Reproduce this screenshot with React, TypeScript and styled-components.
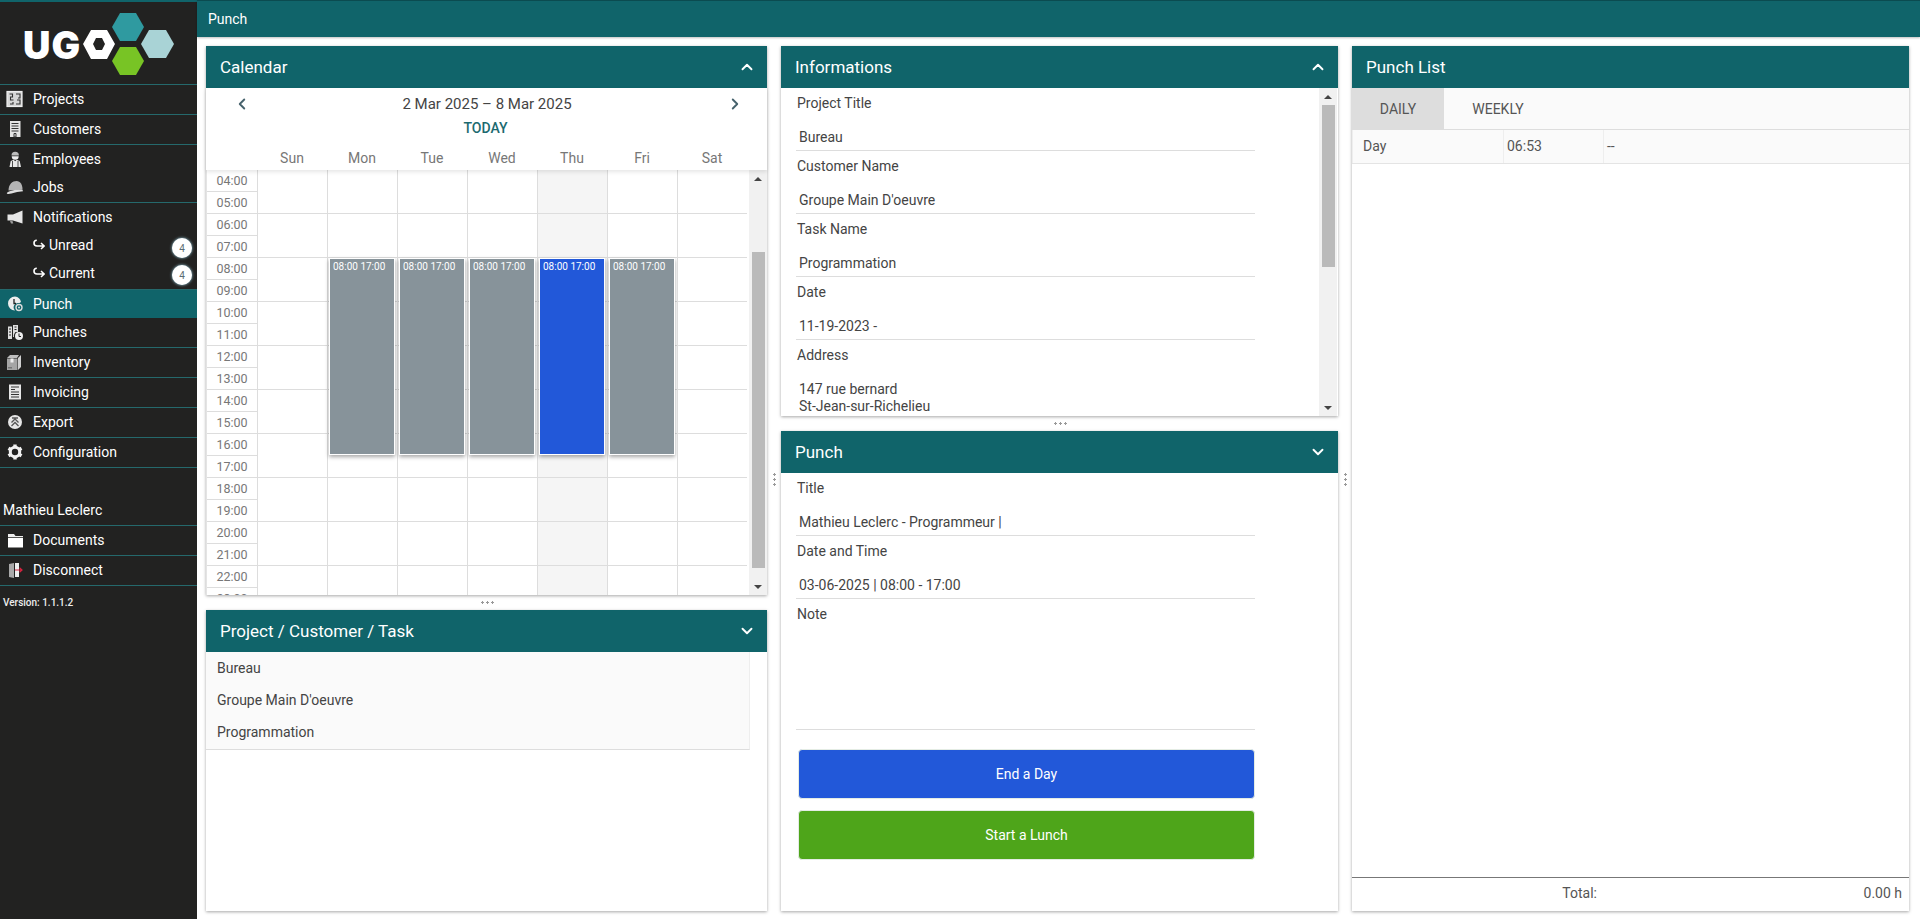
import React from "react";
import styled, { createGlobalStyle } from "styled-components";
import { ChevronDown, ChevronLeft, ChevronRight, ChevronUp } from "lucide-react";

const TEAL = "#10646a";

const GlobalStyle = createGlobalStyle`
  html, body {
    margin: 0;
    padding: 0;
    background: #fff;
    font-family: Roboto, "Liberation Sans", sans-serif;
    font-size: 14px;
    color: #444;
  }
  * { box-sizing: border-box; }
`;

const Shell = styled.div`
  display: flex;
  width: 1920px;
  height: 919px;
  overflow: hidden;
`;

/* ---------- sidebar ---------- */

const Sidebar = styled.nav`
  width: 197px;
  flex: none;
  background: #222221;
  border-top: 2px solid ${TEAL};
  color: #fff;
`;

const LogoBox = styled.div`
  height: 83px;
  border-bottom: 1px solid #25696c;
`;

const NavItem = styled.div<{ $h?: number; $line?: boolean; $active?: boolean; $sub?: boolean }>`
  position: relative;
  display: flex;
  align-items: center;
  height: ${(p) => p.$h ?? 30}px;
  padding-left: ${(p) => (p.$sub ? 33 : 6)}px;
  padding-bottom: ${(p) => (p.$active ? 0 : 2)}px;
  gap: ${(p) => (p.$sub ? 4 : 0)}px;
  background: ${(p) => (p.$active ? TEAL : "transparent")};
  border-bottom: ${(p) => (p.$line === false ? "none" : "1px solid #25696c")};
  font-size: 14px;
`;

const NavIconBox = styled.span`
  width: 27px;
  display: flex;
  align-items: center;
  flex: none;
`;

const Badge = styled.span`
  position: absolute;
  right: 5px;
  top: 6px;
  width: 20px;
  height: 20px;
  border-radius: 50%;
  background: #fff;
  box-shadow: 0 0 3px #9fd4e6;
  color: #5b6b74;
  font-size: 10px;
  display: flex;
  align-items: center;
  justify-content: center;
`;

const UserName = styled.div`
  height: 58px;
  display: flex;
  align-items: flex-end;
  padding: 0 0 7px 3px;
  border-bottom: 1px solid #25696c;
`;

const Version = styled.div`
  padding: 11px 0 0 3px;
  font-size: 10px;
  font-weight: 500;
  color: #eee;
`;

/* ---------- main ---------- */

const Main = styled.main`
  flex: 1;
  display: flex;
  flex-direction: column;
  min-width: 0;
`;

const TopBar = styled.header`
  height: 37px;
  flex: none;
  background: ${TEAL};
  border-top: 1px solid #0b4b50;
  box-shadow: 0 1px 2px rgba(0, 0, 0, 0.25);
  color: #fff;
  font-size: 14px;
  display: flex;
  align-items: center;
  padding-left: 11px;
`;

const Columns = styled.div`
  flex: 1;
  display: flex;
  padding: 9px 11px 8px 9px;
  min-height: 0;
`;

const Column = styled.div<{ $w: number }>`
  width: ${(p) => p.$w}px;
  flex: none;
  display: flex;
  flex-direction: column;
`;

const ColumnGutter = styled.div`
  width: 14px;
  flex: none;
  display: flex;
  justify-content: center;
  padding-top: 426px;
`;

const DotsV = styled.span`
  width: 3px;
  height: 14px;
  background-image: radial-gradient(circle, #999 1px, transparent 1.2px);
  background-size: 3px 5px;
`;

const RowGutter = styled.div`
  height: 15px;
  flex: none;
  display: flex;
  justify-content: center;
  align-items: center;
`;

const DotsH = styled.span`
  width: 14px;
  height: 3px;
  background-image: radial-gradient(circle, #999 1px, transparent 1.2px);
  background-size: 5px 3px;
`;

const Panel = styled.section<{ $h?: number }>`
  display: flex;
  flex-direction: column;
  height: ${(p) => (p.$h ? `${p.$h}px` : "auto")};
  flex: ${(p) => (p.$h ? "none" : "1")};
  background: #fff;
  box-shadow: 0 1px 3px rgba(0, 0, 0, 0.35);
  min-height: 0;
`;

const PanelHeader = styled.div`
  height: 42px;
  flex: none;
  background: ${TEAL};
  color: #fff;
  font-size: 17px;
  display: flex;
  align-items: center;
  justify-content: space-between;
  padding: 0 11px 0 14px;
`;

/* ---------- scrollbars ---------- */

const Track = styled.div`
  position: relative;
  width: 18px;
  flex: none;
  background: #f1f1f1;
`;

const Thumb = styled.div<{ $top: number; $height: number }>`
  position: absolute;
  left: 3px;
  right: 2px;
  top: ${(p) => p.$top}px;
  height: ${(p) => p.$height}px;
  background: #bababa;
`;

const Arrow = styled.span<{ $down?: boolean }>`
  position: absolute;
  left: 5px;
  ${(p) => (p.$down ? "bottom: 6px;" : "top: 7px;")}
  border-left: 4px solid transparent;
  border-right: 4px solid transparent;
  ${(p) => (p.$down ? "border-top: 4px solid #444;" : "border-bottom: 4px solid #444;")}
`;

/* ---------- calendar ---------- */

const CalToolbar = styled.div`
  height: 82px;
  flex: none;
  position: relative;
  z-index: 1;
  background: #fff;
  box-shadow: 0 2px 4px rgba(0, 0, 0, 0.1);
  color: #4a4a4a;
`;

const DateRow = styled.div`
  height: 32px;
  display: flex;
  align-items: center;
  justify-content: space-between;
  padding: 0 23px 0 27px;
  font-size: 15px;
  color: #444;
  svg { color: #46626c; }
`;

const DateLabel = styled.span`
  margin-right: 3px;
`;

const TodayRow = styled.div`
  height: 16px;
  text-align: center;
  line-height: 16px;
  font-size: 14px;
  font-weight: 500;
  color: #1c6a70;
  padding-right: 2px;
`;

const DayHeads = styled.div`
  display: grid;
  grid-template-columns: 51px repeat(7, 70px);
  margin-top: 11px;
  height: 22px;
  line-height: 22px;
  text-align: center;
  color: #777;
`;

const CalBody = styled.div`
  flex: 1;
  display: flex;
  min-height: 0;
`;

const TimeGrid = styled.div`
  flex: 1;
  display: grid;
  grid-template-columns: 51px repeat(7, 70px);
  overflow: hidden;
`;

const TimeCol = styled.div`
  border-left: 1px solid #e4e4e4;
`;

const TimeLabel = styled.div`
  height: 22px;
  line-height: 21px;
  border-bottom: 1px solid #ddd;
  text-align: center;
  font-size: 12.5px;
  color: #777;
`;

const DayCol = styled.div<{ $today?: boolean }>`
  position: relative;
  border-left: 1px solid #ddd;
  background: ${(p) => (p.$today ? "#f5f5f5" : "#fff")};
`;

const HourSlot = styled.div`
  height: 44px;
  border-bottom: 1px solid #ddd;
`;

const CalEvent = styled.div<{ $current?: boolean }>`
  position: absolute;
  top: 88px;
  left: 1px;
  right: 2px;
  height: 197px;
  padding: 2px 3px;
  background: ${(p) => (p.$current ? "#2258d9" : "#87939a")};
  border: 1px solid #fff;
  box-shadow: 0 2px 4px rgba(0, 0, 0, 0.35);
  color: #fff;
  font-size: 10px;
  line-height: 12px;
  white-space: nowrap;
`;

const ProjectTable = styled.div`
  width: 544px;
  padding-bottom: 1px;
  background: #fafafa;
  border-right: 1px solid #eee;
  border-bottom: 1px solid #ddd;
`;

const ProjectRow = styled.div`
  height: 32px;
  line-height: 32px;
  padding-left: 11px;
  color: #444;
`;

/* ---------- info / punch forms ---------- */

const ScrollArea = styled.div`
  flex: 1;
  display: flex;
  min-height: 0;
  padding-right: 1px;
`;

const FieldList = styled.div`
  flex: 1;
  overflow: hidden;
  padding-left: 15px;
`;

const Form = styled.div`
  flex: 1;
  padding-left: 15px;
`;

const Field = styled.div`
  width: 459px;
`;

const FieldLabel = styled.div`
  height: 30px;
  line-height: 30px;
  padding-left: 1px;
  color: #444;
`;

const FieldValue = styled.div`
  min-height: 33px;
  padding: 7px 0 0 3px;
  line-height: 24px;
  border-bottom: 1px solid #ddd;
  color: #444;
`;

const AddressValue = styled.div`
  padding: 11px 0 0 3px;
  line-height: 17px;
  color: #444;
`;

const NoteArea = styled.div`
  height: 102px;
  margin-top: -1px;
  border-bottom: 1px solid #ddd;
`;

const ActionButton = styled.button<{ $color: string }>`
  display: block;
  width: 457px;
  height: 50px;
  margin: 0 0 11px 2px;
  border: 1px solid #e4ece4;
  border-radius: 4px;
  background: ${(p) => p.$color};
  color: #fff;
  font: 14px Roboto, "Liberation Sans", sans-serif;
`;

const Actions = styled.div`
  padding-top: 19px;
`;

/* ---------- punch list ---------- */

const Tabs = styled.div`
  display: flex;
  height: 42px;
  flex: none;
  background: #fafafa;
  border-bottom: 1px solid #ddd;
`;

const Tab = styled.div<{ $active?: boolean; $w: number }>`
  width: ${(p) => p.$w}px;
  background: ${(p) => (p.$active ? "#dddddd" : "transparent")};
  text-align: center;
  line-height: 42px;
  color: #555;
`;

const ListRow = styled.div`
  display: grid;
  grid-template-columns: 151px 100px 1fr;
  height: 34px;
  flex: none;
  background: #fafafa;
  border-bottom: 1px solid #e4e4e4;
  line-height: 32px;
`;

const ListCell = styled.div<{ $pl?: number }>`
  padding-left: ${(p) => p.$pl ?? 3}px;
  border-left: 1px solid #eee;
  color: #555;
`;

const ListSpacer = styled.div`
  flex: 1;
`;

const ListFooter = styled.div`
  display: grid;
  grid-template-columns: 245px 1fr;
  height: 34px;
  flex: none;
  border-top: 1px solid #777;
  line-height: 31px;
  color: #555;
  text-align: right;
  padding-right: 7px;
`;

/* ---------- drawings ---------- */

const Svg: React.FC<{ children: React.ReactNode }> = ({ children }) => (
  <svg width={18} height={18} viewBox="0 0 18 18">
    {children}
  </svg>
);

const Logo = () => (
  <svg width="197" height="83" viewBox="0 0 197 83">
    <text x="23" y="57" fill="#fff" fontFamily="Inter, Roboto, sans-serif" fontWeight="900" fontSize="38" letterSpacing="1">
      UG
    </text>
    <path
      fillRule="evenodd"
      fill="#fff"
      d="M83 42 L91 28 L107 28 L115 42 L107 57 L91 57 Z M93 42 L96 36 L102 36 L105 42 L102 48 L96 48 Z"
    />
    <polygon points="112,25 120,11 136,11 144,25 136,39 120,39" fill="#2f9aa0" />
    <polygon points="141,42 149,28 166,28 174,42 166,56 149,56" fill="#a9d3d6" />
    <polygon points="112,59 120,45 136,45 144,59 136,73 120,73" fill="#78c425" />
  </svg>
);

const IconProjects = () => (
  <Svg>
    <rect x="1" y="1.500" width="15" height="15" fill="#d6d6d6" stroke="#eee" strokeWidth="1.200" />
    <path d="M3.500 4h3v3h-2v3h3M10 4h4v4h-2M4 14h3v-2M10 14h4v-4h-3" fill="none" stroke="#333" strokeWidth="1.100" />
  </Svg>
);
const IconCustomers = () => (
  <Svg>
    <rect x="4" y="1" width="10.500" height="16" fill="#e4e4e4" />
    <path d="M5.500 3.500h7M5.500 6h7M5.500 8.500h7M5.500 11h7M8 13.500h2V17H8z" stroke="#333" strokeWidth="1" fill="none" />
  </Svg>
);
const IconEmployee = () => (
  <Svg>
    <path d="M5.500 5.500a3.700 3.700 0 0 1 7.400 0z" fill="#bbb" />
    <path d="M5.700 6.300h7a3.500 3.500 0 0 1-7 0z" fill="#eee" />
    <path d="M3.500 17l1.200-6 3-1.200 1.500 1.500 1.500-1.500 3 1.200 1.300 6z" fill="#e8e8e8" />
    <path d="M6.500 11v6M12 11v6" stroke="#222" strokeWidth="0.800" />
  </Svg>
);
const IconHat = () => (
  <Svg>
    <path d="M2.500 12.500C2.500 6 6.500 3 10.500 3S16.500 7 16.500 11.500z" fill="#b4b4b4" />
    <path d="M.8 15c2-2.200 11-3.800 15.700-3.300l.5 1.500C12 13.400 6 15.500 2.500 16c-1 0-1.700-.4-1.700-1z" fill="#dedede" />
  </Svg>
);
const IconMegaphone = () => (
  <Svg>
    <path d="M16.500 2.500v13L7 12.500H1.500v-6H7z" fill="#e6e6e6" />
    <path d="M4 13h2.500l.8 2.500H5z" fill="#999" />
  </Svg>
);
const IconPunch = () => (
  <Svg>
    <path d="M9 1.500a7 7 0 1 0 0 14c-1-1-2-3-1-5 .5-1.500 3-3 5.500-2.500l1.500-1A7 7 0 0 0 9 1.500z" fill="#eee" />
    <path d="M8 4v4.500h2" stroke="#222" strokeWidth="1.300" fill="none" />
    <circle cx="13" cy="12.500" r="3" fill="none" stroke="#ddd" strokeWidth="1.400" />
    <circle cx="13" cy="12.500" r="1" fill="#ddd" />
  </Svg>
);
const IconPunches = () => (
  <Svg>
    <path d="M2 3.500h4V16H2zM7 2h5v7H9.500c-1 1-2 3-1.500 5H7z" fill="#ddd" />
    <path d="M3 6h2M3 9h2M3 12h2M8.500 4h2M8.500 6.500h2" stroke="#222" strokeWidth="1" />
    <circle cx="13" cy="13" r="4" fill="#eee" />
    <path d="M13 10.500V13.500h2" stroke="#222" strokeWidth="1" fill="none" />
  </Svg>
);
const IconBox = () => (
  <Svg>
    <path d="M1 5l3-3h9l-2 3z" fill="#bdbdbd" />
    <path d="M1 5.500h10.500V17H1z" fill="#a5a5a5" />
    <path d="M12 5l3-3v12l-3 3z" fill="#cfcfcf" />
    <path d="M4.500 5.500h3v4h-3z" fill="#eee" />
    <path d="M3 14v1.500M5 14v1.500" stroke="#444" strokeWidth="1" />
  </Svg>
);
const IconInvoice = () => (
  <Svg>
    <rect x="3" y="1.500" width="12" height="15" fill="#e6e6e6" />
    <path d="M5 4h8M5 6.500h4M5 9h8M5 11.500h8M5 14h8" stroke="#333" strokeWidth="1" />
  </Svg>
);
const IconExport = () => (
  <Svg>
    <circle cx="9" cy="9" r="7" fill="#e6e6e6" />
    <path d="M5.500 9.500L9 6l3.500 3.500M5.500 13L9 9.500l3.500 3.500M6 5h6" stroke="#555" strokeWidth="1.300" fill="none" />
  </Svg>
);
const IconGear = () => (
  <Svg>
    <circle cx="9" cy="9" r="4.700" fill="none" stroke="#f2f2f2" strokeWidth="3" />
    {[0, 60, 120, 180, 240, 300].map((a) => (
      <rect key={a} x="7.300" y="1.500" width="3.400" height="3" fill="#f2f2f2" transform={`rotate(${a} 9 9)`} />
    ))}
  </Svg>
);
const IconFolder = () => (
  <Svg>
    <path d="M2 3h6l1.500 2H17v1.200H2z" fill="#eee" />
    <path d="M2 7h15v9.500H2z" fill="#fff" />
  </Svg>
);
const IconDoor = () => (
  <Svg>
    <path d="M3 3l5-1v15l-5-1z" fill="#a9a9a9" />
    <rect x="9" y="2" width="4" height="14" fill="#eee" />
    <path d="M9 9h7M13.500 6.800L16 9l-2.500 2.200" stroke="#d8233f" strokeWidth="1.200" fill="none" />
  </Svg>
);
const HookArrow = () => (
  <svg width="12" height="12" viewBox="0 0 12 12">
    <path
      d="M3.800 1.300C2 1.300 1 2.500 1 4c0 1.800 1.300 3 3 3h7M8 4l3.200 3L8 10"
      fill="none"
      stroke="#fff"
      strokeWidth="1.600"
    />
  </svg>
);

/* ---------- data ---------- */

const DAYS = ["Sun", "Mon", "Tue", "Wed", "Thu", "Fri", "Sat"];
const HOURS = Array.from({ length: 20 }, (_, i) => `${String(i + 4).padStart(2, "0")}:00`);

const Item: React.FC<{
  icon: React.ReactNode;
  label: string;
  h?: number;
  line?: boolean;
  active?: boolean;
}> = ({ icon, label, h, line, active }) => (
  <NavItem $h={h} $line={line} $active={active}>
    <NavIconBox>{icon}</NavIconBox>
    {label}
  </NavItem>
);

const SubItem: React.FC<{ label: string; h: number; line?: boolean }> = ({ label, h, line }) => (
  <NavItem $sub $h={h} $line={line}>
    <HookArrow />
    {label}
    <Badge>4</Badge>
  </NavItem>
);

const TextField: React.FC<{ label: string; value: string }> = ({ label, value }) => (
  <Field>
    <FieldLabel>{label}</FieldLabel>
    <FieldValue>{value}</FieldValue>
  </Field>
);

export default function App() {
  return (
    <Shell>
      <GlobalStyle />
      <Sidebar>
        <LogoBox>
          <Logo />
        </LogoBox>
        <Item icon={<IconProjects />} label="Projects" />
        <Item icon={<IconCustomers />} label="Customers" />
        <Item icon={<IconEmployee />} label="Employees" h={29} line={false} />
        <Item icon={<IconHat />} label="Jobs" h={29} />
        <Item icon={<IconMegaphone />} label="Notifications" h={29} line={false} />
        <SubItem label="Unread" h={27} line={false} />
        <SubItem label="Current" h={31} />
        <Item icon={<IconPunch />} label="Punch" h={28} active line={false} />
        <Item icon={<IconPunches />} label="Punches" />
        <Item icon={<IconBox />} label="Inventory" />
        <Item icon={<IconInvoice />} label="Invoicing" />
        <Item icon={<IconExport />} label="Export" />
        <Item icon={<IconGear />} label="Configuration" />
        <UserName>Mathieu Leclerc</UserName>
        <Item icon={<IconFolder />} label="Documents" />
        <Item icon={<IconDoor />} label="Disconnect" />
        <Version>Version: 1.1.1.2</Version>
      </Sidebar>

      <Main>
        <TopBar>Punch</TopBar>
        <Columns>
          <Column $w={561}>
            <Panel $h={549}>
              <PanelHeader>
                Calendar
                <ChevronUp size={18} strokeWidth={2.5} />
              </PanelHeader>
              <CalToolbar>
                <DateRow>
                  <ChevronLeft size={18} strokeWidth={2.5} />
                  <DateLabel>2 Mar 2025 – 8 Mar 2025</DateLabel>
                  <ChevronRight size={18} strokeWidth={2.5} />
                </DateRow>
                <TodayRow>TODAY</TodayRow>
                <DayHeads>
                  <span />
                  {DAYS.map((d) => (
                    <span key={d}>{d}</span>
                  ))}
                </DayHeads>
              </CalToolbar>
              <CalBody>
                <TimeGrid>
                  <TimeCol>
                    {HOURS.map((h) => (
                      <TimeLabel key={h}>{h}</TimeLabel>
                    ))}
                  </TimeCol>
                  {DAYS.map((d, i) => (
                    <DayCol key={d} $today={d === "Thu"}>
                      {HOURS.slice(0, 10).map((h) => (
                        <HourSlot key={h} />
                      ))}
                      {i >= 1 && i <= 5 && <CalEvent $current={d === "Thu"}>08:00 17:00</CalEvent>}
                    </DayCol>
                  ))}
                </TimeGrid>
                <Track>
                  <Arrow />
                  <Thumb $top={82} $height={316} />
                  <Arrow $down />
                </Track>
              </CalBody>
            </Panel>
            <RowGutter>
              <DotsH />
            </RowGutter>
            <Panel>
              <PanelHeader>
                Project / Customer / Task
                <ChevronDown size={18} strokeWidth={2.5} />
              </PanelHeader>
              <ProjectTable>
                <ProjectRow>Bureau</ProjectRow>
                <ProjectRow>Groupe Main D'oeuvre</ProjectRow>
                <ProjectRow>Programmation</ProjectRow>
              </ProjectTable>
            </Panel>
          </Column>

          <ColumnGutter>
            <DotsV />
          </ColumnGutter>

          <Column $w={557}>
            <Panel $h={370}>
              <PanelHeader>
                Informations
                <ChevronUp size={18} strokeWidth={2.5} />
              </PanelHeader>
              <ScrollArea>
                <FieldList>
                  <TextField label="Project Title" value="Bureau" />
                  <TextField label="Customer Name" value="Groupe Main D'oeuvre" />
                  <TextField label="Task Name" value="Programmation" />
                  <TextField label="Date" value="11-19-2023 -" />
                  <Field>
                    <FieldLabel>Address</FieldLabel>
                    <AddressValue>
                      147 rue bernard
                      <br />
                      St-Jean-sur-Richelieu
                    </AddressValue>
                  </Field>
                </FieldList>
                <Track>
                  <Arrow />
                  <Thumb $top={17} $height={162} />
                  <Arrow $down />
                </Track>
              </ScrollArea>
            </Panel>
            <RowGutter>
              <DotsH />
            </RowGutter>
            <Panel>
              <PanelHeader>
                Punch
                <ChevronDown size={18} strokeWidth={2.5} />
              </PanelHeader>
              <Form>
                <TextField label="Title" value="Mathieu Leclerc - Programmeur |" />
                <TextField label="Date and Time" value="03-06-2025 | 08:00 - 17:00" />
                <Field>
                  <FieldLabel>Note</FieldLabel>
                  <NoteArea />
                </Field>
                <Actions>
                  <ActionButton $color="#2258d9">End a Day</ActionButton>
                  <ActionButton $color="#4ea51a">Start a Lunch</ActionButton>
                </Actions>
              </Form>
            </Panel>
          </Column>

          <ColumnGutter>
            <DotsV />
          </ColumnGutter>

          <Column $w={557}>
            <Panel>
              <PanelHeader>Punch List</PanelHeader>
              <Tabs>
                <Tab $active $w={92}>
                  DAILY
                </Tab>
                <Tab $w={108}>WEEKLY</Tab>
              </Tabs>
              <ListRow>
                <ListCell $pl={10}>Day</ListCell>
                <ListCell>06:53</ListCell>
                <ListCell>--</ListCell>
              </ListRow>
              <ListSpacer />
              <ListFooter>
                <span>Total:</span>
                <span>0.00 h</span>
              </ListFooter>
            </Panel>
          </Column>
        </Columns>
      </Main>
    </Shell>
  );
}
